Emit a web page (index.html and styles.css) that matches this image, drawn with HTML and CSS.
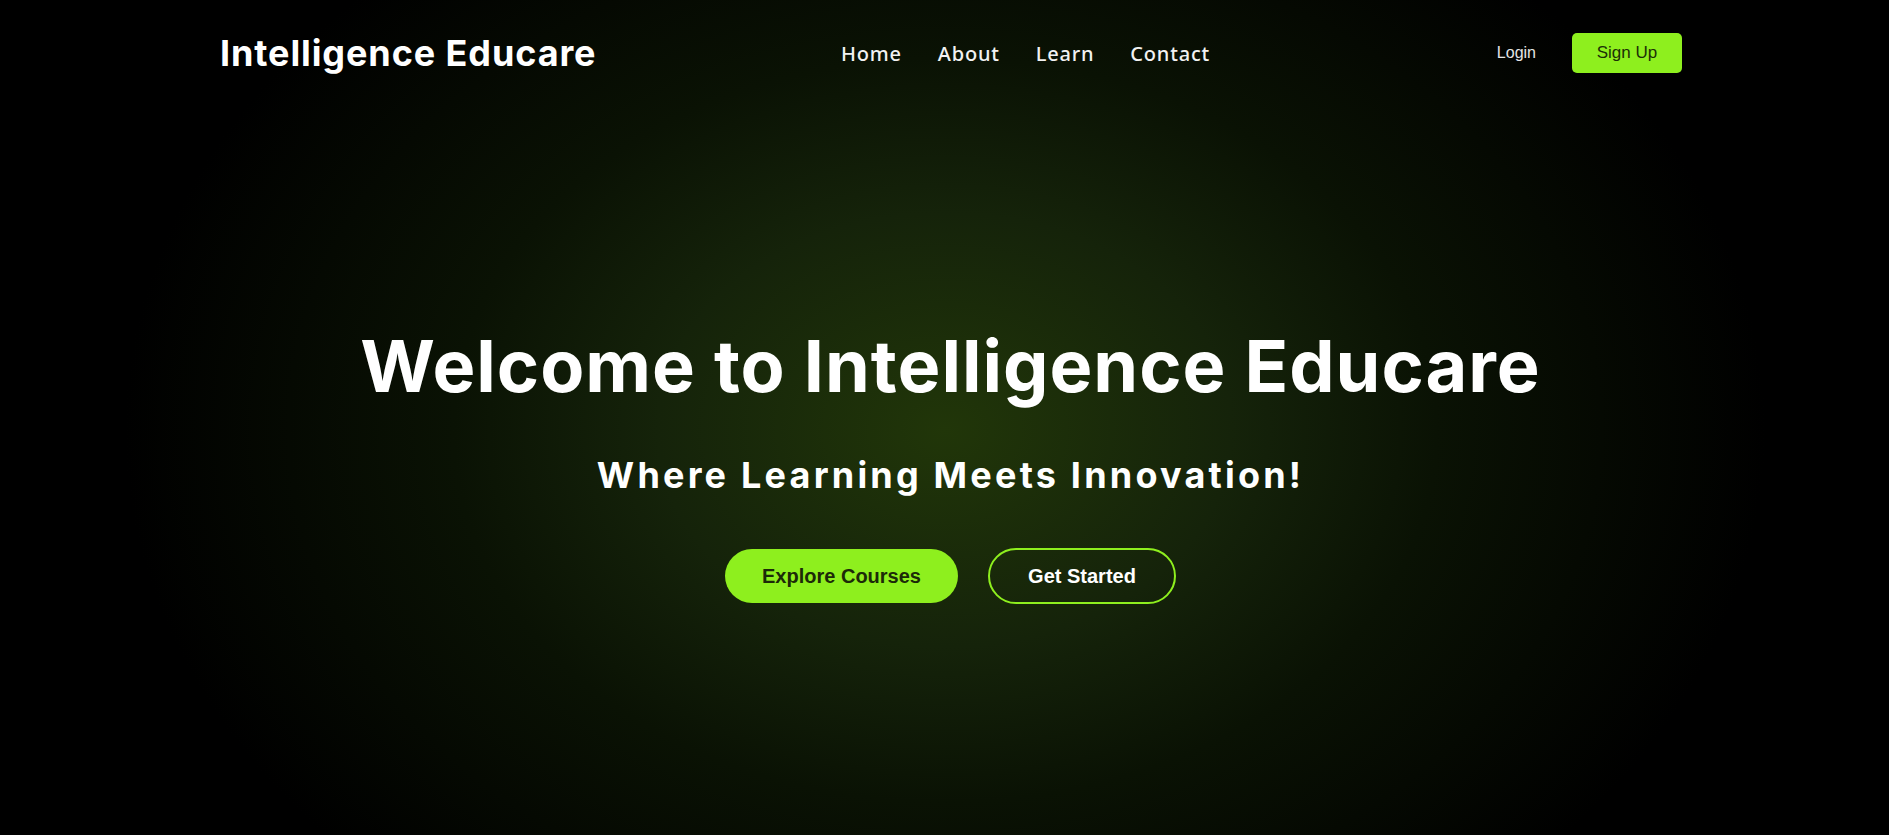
FILE: index.html
```html
<!DOCTYPE html>
<html lang="en">
<head>
<meta charset="utf-8">
<title>Intelligence Educare</title>
<link rel="stylesheet" href="styles.css">
</head>
<body>
<div class="page">
  <header class="header">
    <div class="logo">Intelligence Educare</div>
    <nav class="nav">
      <a href="#">Home</a>
      <a href="#">About</a>
      <a href="#">Learn</a>
      <a href="#">Contact</a>
    </nav>
    <div class="auth">
      <a href="#" class="login">Login</a>
      <a href="#" class="signup">Sign Up</a>
    </div>
  </header>
  <main class="hero">
    <h1 class="title">Welcome to Intelligence Educare</h1>
    <h2 class="subtitle">Where Learning Meets Innovation!</h2>
    <div class="actions">
      <a href="#" class="btn btn-primary">Explore Courses</a>
      <a href="#" class="btn btn-outline">Get Started</a>
    </div>
  </main>
</div>
</body>
</html>
```
FILE: styles.css
```css
* { box-sizing: border-box; }
html, body { margin: 0; padding: 0; height: 100%; }
body {
  background: #000;
  font-family: "Inter", "Noto Sans", sans-serif;
  color: #fff;
  overflow: hidden;
}
.page {
  width: 1889px;
  height: 835px;
  background: radial-gradient(ellipse 820px 620px at 945px 430px, #213609 0%, #15230a 35%, #0a1204 60%, #000 100%);
}
.header {
  width: 1462px;
  margin-left: 220px;
  padding-top: 33px;
  height: 73px;
  display: flex;
  align-items: center;
}
.logo {
  font-family: "Inter", sans-serif;
  font-weight: 700;
  font-size: 36px;
  letter-spacing: 0.9px;
  color: #fff;
  width: 380px;
  line-height: 40px;
  white-space: nowrap;
}
.nav {
  margin-left: 241px;
  display: flex;
  gap: 36px;
}
.nav a {
  font-family: "Noto Sans", sans-serif;
  font-weight: 500;
  font-size: 20px;
  letter-spacing: 0.8px;
  color: #f2f2f2;
  text-decoration: none;
}
.auth {
  margin-left: auto;
  display: flex;
  align-items: center;
  gap: 36px;
}
.login {
  font-family: "Liberation Sans", Arial, sans-serif;
  font-size: 16px;
  color: #e6e6e6;
  text-decoration: none;
}
.signup {
  font-family: "Liberation Sans", Arial, sans-serif;
  font-size: 17px;
  color: #1c2e06;
  background: #8eef1e;
  width: 110px;
  height: 40px;
  border-radius: 5px;
  display: flex;
  align-items: center;
  justify-content: center;
  text-decoration: none;
}
.hero {
  display: flex;
  flex-direction: column;
  align-items: center;
  padding-top: 251px;
  padding-left: 12px;
}
.title {
  margin: 0;
  font-family: "Inter", sans-serif;
  font-weight: 700;
  font-size: 72px;
  line-height: 84px;
  letter-spacing: 1px;
  color: #fff;
  white-space: nowrap;
}
.subtitle {
  margin: 45px 0 0;
  font-family: "Inter", sans-serif;
  font-weight: 700;
  font-size: 36px;
  line-height: 44px;
  letter-spacing: 3.2px;
  color: #fff;
  white-space: nowrap;
}
.actions {
  margin-top: 51px;
  display: flex;
  gap: 30px;
  align-items: center;
}
.btn {
  font-family: "Liberation Sans", Arial, sans-serif;
  font-weight: 700;
  font-size: 20px;
  text-decoration: none;
  border-radius: 28px;
  display: flex;
  align-items: center;
  justify-content: center;
}
.btn-primary {
  width: 233px;
  height: 54px;
  background: #8eef1e;
  color: #1c2a08;
}
.btn-outline {
  width: 188px;
  height: 56px;
  border: 2px solid #8eef1e;
  color: #fff;
}
```
